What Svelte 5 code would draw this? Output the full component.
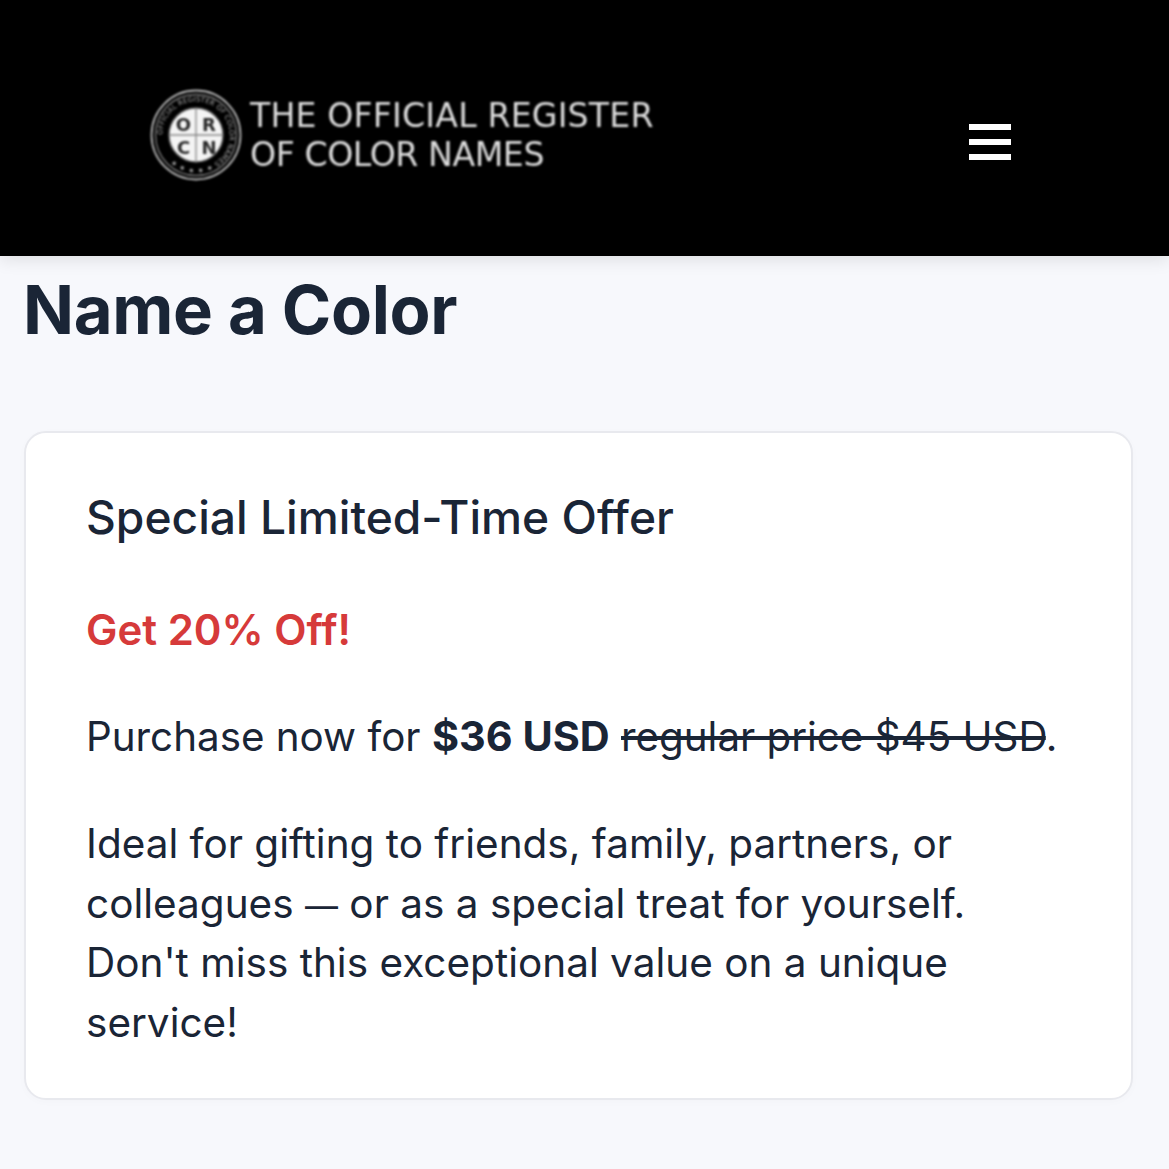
<script>
  const quadrants = [
    { l: 'O', x: 33.5, y: 41.5 },
    { l: 'R', x: 59, y: 41.5 },
    { l: 'C', x: 33.5, y: 64.5 },
    { l: 'N', x: 59, y: 64.5 }
  ];
</script>

<div class="page">
  <header class="topbar">
    <div class="brand">
      <svg class="seal" viewBox="0 0 92 92" width="92" height="92" aria-hidden="true">
        <defs>
          <path id="ring" d="M46 46 m-33.500 0 a33.500 33.500 0 1 1 67 0 a33.500 33.500 0 1 1 -67 0" />
        </defs>
        <circle cx="46" cy="46" r="44.5" fill="none" stroke="#b5b5b5" stroke-width="1.8" />
        <circle cx="46" cy="46" r="40.5" fill="none" stroke="#777" stroke-width="1.4" />
        <text class="ringtext"><textPath href="#ring" startOffset="0">OFFICIAL REGISTER OF COLOR NAMES ★ ★ ★ ★ ★</textPath></text>
        <circle cx="46" cy="46" r="27" fill="#f4f4f4" stroke="#666" stroke-width="1.5" />
        <path d="M46 19V73M19 46H73" stroke="#888" stroke-width="1.3" />
        {#each quadrants as q}
          <text class="mono" x={q.x} y={q.y} text-anchor="middle">{q.l}</text>
        {/each}
      </svg>
      <div class="wordmark">
        <div class="line-one">THE OFFICIAL REGISTER</div>
        <div class="line-two">OF COLOR NAMES</div>
      </div>
    </div>
    <button class="menu" aria-label="Menu"><span></span><span></span><span></span></button>
  </header>

  <main class="content">
    <h1>Name a Color</h1>
    <section class="card">
      <h2>Special Limited-Time Offer</h2>
      <p class="deal">Get 20% Off!</p>
      <p>Purchase now for <strong>$36 USD</strong> <s>regular price $45 USD</s>.</p>
      <p class="pitch">Ideal for gifting to friends, family, partners, or colleagues <span class="dash">—</span> or as a special treat for yourself. Don't miss this exceptional value on a unique service!</p>
    </section>
  </main>
</div>

<style>
  :global(body) {
    margin: 0;
    background: #f7f8fc;
  }
  .page {
    height: 1169px;
    overflow: hidden;
    background: #f7f8fc;
    color: #1a2536;
    font-family: Inter, "Liberation Sans", sans-serif;
  }
  .topbar {
    height: 256px;
    box-sizing: border-box;
    background: #000;
    display: flex;
    align-items: center;
    justify-content: space-between;
    padding: 28px 158px 0 150px;
    box-shadow: 0 4px 16px rgba(0, 0, 0, 0.1);
  }
  .brand {
    display: flex;
    align-items: center;
    gap: 8px;
    margin-top: -14px;
    filter: blur(1px);
  }
  .seal {
    display: block;
    flex: none;
  }
  .ringtext {
    font: 7px "DejaVu Sans", sans-serif;
    fill: #aaa;
    letter-spacing: 0.15px;
  }
  .mono {
    font: bold 18px "DejaVu Sans", sans-serif;
    fill: #2a2a2a;
  }
  .wordmark {
    color: #dcdcdc;
    font-family: "DejaVu Sans", sans-serif;
    font-size: 33.2px;
    line-height: 39px;
    white-space: nowrap;
  }
  .line-one {
    letter-spacing: 0.15px;
  }
  .line-two {
    letter-spacing: -0.45px;
  }
  .menu {
    width: 42px;
    height: 36px;
    padding: 0;
    margin: 0;
    border: 0;
    background: none;
    display: flex;
    flex-direction: column;
    justify-content: space-between;
  }
  .menu span {
    display: block;
    height: 6px;
    background: #fff;
  }
  .content {
    padding: 0 36px 0 24px;
  }
  h1 {
    margin: 0 0 0 -1px;
    padding-top: 16px;
    font-size: 67px;
    line-height: 76px;
    font-weight: 700;
    letter-spacing: -0.4px;
  }
  .card {
    margin-top: 83px;
    box-sizing: border-box;
    height: 669px;
    background: #fff;
    border: 2px solid #e8e9ee;
    border-radius: 22px;
    padding: 54px 60px 0;
    box-shadow: 0 2px 8px rgba(0, 0, 0, 0.02);
  }
  h2 {
    margin: 0;
    font-size: 46.2px;
    line-height: 60px;
    font-weight: 500;
  }
  p {
    margin: 47px 0 0;
    font-size: 40.35px;
    line-height: 59.5px;
    font-weight: 400;
  }
  .deal {
    margin-top: 53px;
    color: #d63a3a;
    font-size: 42px;
    font-weight: 600;
  }
  .pitch {
    margin-top: 48px;
    padding-right: 20px;
    font-size: 40.5px;
  }
  .dash {
    font-size: 33px;
    line-height: 0;
  }
  strong {
    font-size: 41.4px;
    line-height: 0;
    font-weight: 700;
  }
</style>
